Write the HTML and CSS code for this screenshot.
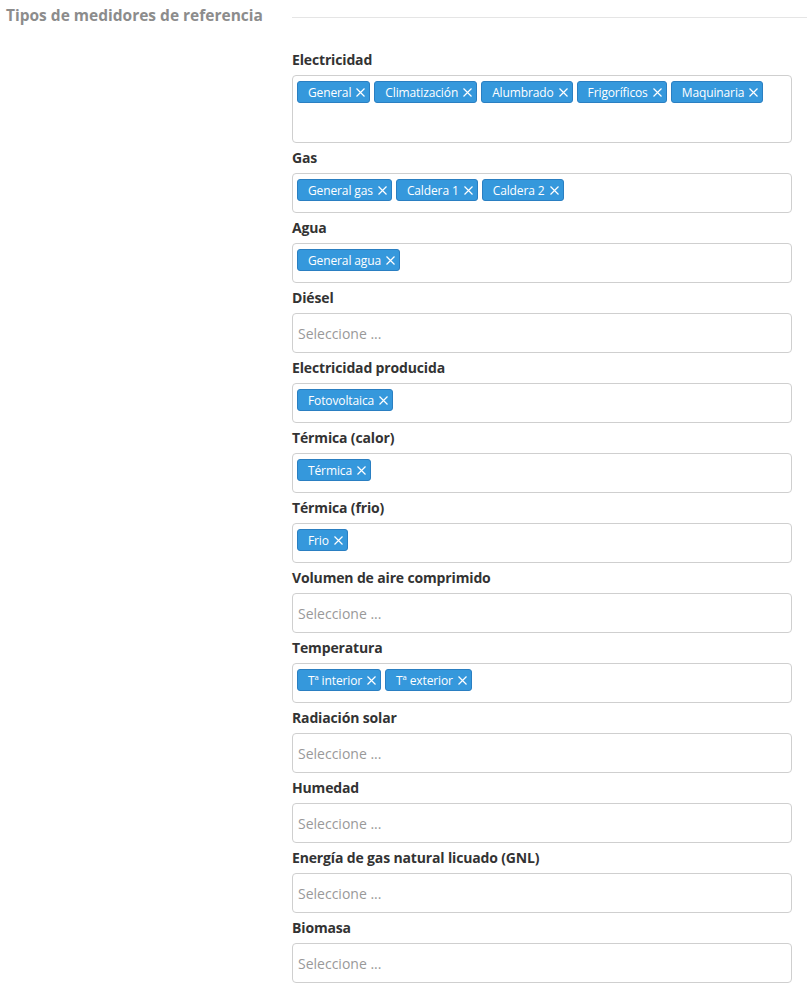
FILE: index.html
```html
<!DOCTYPE html>
<html lang="es">
<head>
<meta charset="utf-8">
<title>Tipos de medidores de referencia</title>
<link rel="stylesheet" href="styles.css">
</head>
<body>
<section class="section">
  <div class="section-head">
    <h2 class="section-title">Tipos de medidores de referencia</h2>
    <div class="section-rule"></div>
  </div>
  <div class="form">
    <div class="field">
      <label class="field-label">Electricidad</label>
      <div class="select">
        <span class="tag">General<svg class="x" viewBox="0 0 9 9"><path d="M0.5 0.5L8.5 8.5M8.5 0.5L0.5 8.5"/></svg></span>
        <span class="tag">Climatización<svg class="x" viewBox="0 0 9 9"><path d="M0.5 0.5L8.5 8.5M8.5 0.5L0.5 8.5"/></svg></span>
        <span class="tag">Alumbrado<svg class="x" viewBox="0 0 9 9"><path d="M0.5 0.5L8.5 8.5M8.5 0.5L0.5 8.5"/></svg></span>
        <span class="tag">Frigoríficos<svg class="x" viewBox="0 0 9 9"><path d="M0.5 0.5L8.5 8.5M8.5 0.5L0.5 8.5"/></svg></span>
        <span class="tag">Maquinaria<svg class="x" viewBox="0 0 9 9"><path d="M0.5 0.5L8.5 8.5M8.5 0.5L0.5 8.5"/></svg></span>
        <span class="search"></span>
      </div>
    </div>
    <div class="field">
      <label class="field-label">Gas</label>
      <div class="select">
        <span class="tag">General gas<svg class="x" viewBox="0 0 9 9"><path d="M0.5 0.5L8.5 8.5M8.5 0.5L0.5 8.5"/></svg></span>
        <span class="tag">Caldera 1<svg class="x" viewBox="0 0 9 9"><path d="M0.5 0.5L8.5 8.5M8.5 0.5L0.5 8.5"/></svg></span>
        <span class="tag">Caldera 2<svg class="x" viewBox="0 0 9 9"><path d="M0.5 0.5L8.5 8.5M8.5 0.5L0.5 8.5"/></svg></span>
      </div>
    </div>
    <div class="field">
      <label class="field-label">Agua</label>
      <div class="select">
        <span class="tag">General agua<svg class="x" viewBox="0 0 9 9"><path d="M0.5 0.5L8.5 8.5M8.5 0.5L0.5 8.5"/></svg></span>
      </div>
    </div>
    <div class="field">
      <label class="field-label">Diésel</label>
      <div class="select empty"><span class="placeholder">Seleccione ...</span></div>
    </div>
    <div class="field">
      <label class="field-label">Electricidad producida</label>
      <div class="select">
        <span class="tag">Fotovoltaica<svg class="x" viewBox="0 0 9 9"><path d="M0.5 0.5L8.5 8.5M8.5 0.5L0.5 8.5"/></svg></span>
      </div>
    </div>
    <div class="field">
      <label class="field-label">Térmica (calor)</label>
      <div class="select">
        <span class="tag">Térmica<svg class="x" viewBox="0 0 9 9"><path d="M0.5 0.5L8.5 8.5M8.5 0.5L0.5 8.5"/></svg></span>
      </div>
    </div>
    <div class="field">
      <label class="field-label">Térmica (frio)</label>
      <div class="select">
        <span class="tag">Frio<svg class="x" viewBox="0 0 9 9"><path d="M0.5 0.5L8.5 8.5M8.5 0.5L0.5 8.5"/></svg></span>
      </div>
    </div>
    <div class="field">
      <label class="field-label">Volumen de aire comprimido</label>
      <div class="select empty"><span class="placeholder">Seleccione ...</span></div>
    </div>
    <div class="field">
      <label class="field-label">Temperatura</label>
      <div class="select">
        <span class="tag">Tª interior<svg class="x" viewBox="0 0 9 9"><path d="M0.5 0.5L8.5 8.5M8.5 0.5L0.5 8.5"/></svg></span>
        <span class="tag">Tª exterior<svg class="x" viewBox="0 0 9 9"><path d="M0.5 0.5L8.5 8.5M8.5 0.5L0.5 8.5"/></svg></span>
      </div>
    </div>
    <div class="field">
      <label class="field-label">Radiación solar</label>
      <div class="select empty"><span class="placeholder">Seleccione ...</span></div>
    </div>
    <div class="field">
      <label class="field-label">Humedad</label>
      <div class="select empty"><span class="placeholder">Seleccione ...</span></div>
    </div>
    <div class="field">
      <label class="field-label">Energía de gas natural licuado (GNL)</label>
      <div class="select empty"><span class="placeholder">Seleccione ...</span></div>
    </div>
    <div class="field">
      <label class="field-label">Biomasa</label>
      <div class="select empty"><span class="placeholder">Seleccione ...</span></div>
    </div>
  </div>
</section>
</body>
</html>
```
FILE: styles.css
```css
html, body {
  margin: 0;
  padding: 0;
  background: #fff;
}
body {
  font-family: "Open Sans", "Noto Sans", sans-serif;
  color: #333;
  overflow: hidden;
}
.section {
  display: flex;
  flex-direction: column;
}
.section-head {
  display: grid;
  grid-template-columns: 292px 1fr;
  align-items: center;
  height: 30px;
}
.section-title {
  margin: 0;
  padding-left: 6px;
  font-size: 15.5px;
  font-weight: 700;
  color: #8c8c8c;
  white-space: nowrap;
  line-height: 28px;
}
.section-rule {
  height: 1px;
  background: #e5e5e5;
  margin-top: 4px;
}
.form {
  margin-left: 292px;
  width: 500px;
  padding-top: 20px;
}
.field {
  display: flex;
  flex-direction: column;
  margin-bottom: 5px;
}
.field-label {
  font-size: 14px;
  font-weight: 700;
  line-height: 20px;
  margin-bottom: 5px;
  color: #333;
  letter-spacing: -0.15px;
}
.select {
  box-sizing: border-box;
  min-height: 40px;
  border: 1px solid #cfcfcf;
  border-radius: 4px;
  padding: 5px 4px 6px;
  display: flex;
  flex-wrap: wrap;
  align-items: flex-start;
  column-gap: 4px;
  row-gap: 11px;
}
.select.empty {
  align-items: center;
  padding: 0 5px;
}
.tag {
  box-sizing: border-box;
  height: 22px;
  display: inline-flex;
  align-items: center;
  background: #3598dc;
  border: 1px solid #2a7fc2;
  border-radius: 3px;
  color: #fff;
  font-size: 12px;
  letter-spacing: -0.12px;
  padding: 0 4px 0 10px;
  white-space: nowrap;
}
.x {
  width: 9px;
  height: 9px;
  margin-left: 5px;
  stroke: #fff;
  stroke-width: 1.2;
  fill: none;
}
.search {
  flex: 1 0 60px;
  height: 22px;
}
.placeholder {
  color: #999;
  font-size: 14px;
}
```
